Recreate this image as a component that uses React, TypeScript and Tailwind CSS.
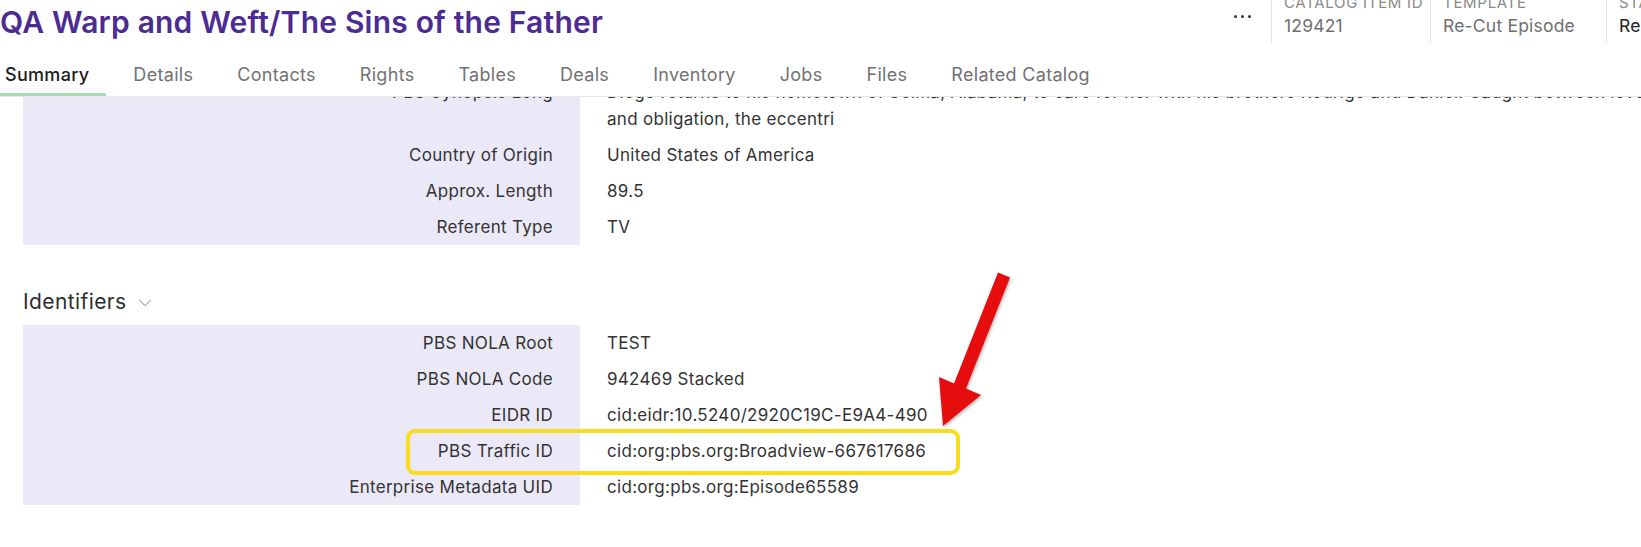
import * as React from "react";
import { ChevronDown } from "lucide-react";

type Row = {
  label: string;
  value: React.ReactNode;
};

const TABS = [
  "Summary",
  "Details",
  "Contacts",
  "Rights",
  "Tables",
  "Deals",
  "Inventory",
  "Jobs",
  "Files",
  "Related Catalog",
];

const generalRows: Row[] = [
  { label: "Country of Origin", value: "United States of America" },
  { label: "Approx. Length", value: "89.5" },
  { label: "Referent Type", value: "TV" },
];

const identifierRows: Row[] = [
  { label: "PBS NOLA Root", value: "TEST" },
  { label: "PBS NOLA Code", value: "942469 Stacked" },
  { label: "EIDR ID", value: "cid:eidr:10.5240/2920C19C-E9A4-490" },
  { label: "PBS Traffic ID", value: "cid:org:pbs.org:Broadview-667617686" },
  { label: "Enterprise Metadata UID", value: "cid:org:pbs.org:Episode65589" },
];

function FieldRow({ label, value }: Row) {
  return (
    <div className="flex">
      <div className="w-[557px] shrink-0 bg-[#ebe9f7] py-[4.5px] pr-[27px] text-right leading-[27px]">
        {label}
      </div>
      <div className="whitespace-nowrap py-[4.5px] pl-[27px] leading-[27px]">
        {value}
      </div>
    </div>
  );
}

function HeaderField({
  label,
  value,
  width,
  dark,
}: {
  label: string;
  value: string;
  width: string;
  dark?: boolean;
}) {
  return (
    <div className={`${width} shrink-0 overflow-hidden border-l border-[#e4e4e4] pb-[6px] pl-[12px]`}>
      <div className="-mt-[2px] whitespace-nowrap text-[15px] leading-[18px] tracking-[0.7px] text-[#8a8a8a]">
        {label}
      </div>
      <div
        className={`mt-[2px] whitespace-nowrap text-[17.5px] leading-[24px] tracking-[0.2px] ${
          dark ? "text-[#222]" : "text-[#6f6f6f]"
        }`}
      >
        {value}
      </div>
    </div>
  );
}

export default function App() {
  return (
    <div className="relative h-[547px] w-[1641px] overflow-hidden bg-white font-['Inter',sans-serif] text-[17px] tracking-[0.3px] text-[#333]">
      <header className="relative z-10 h-[97px] border-b border-[#e6e6e6] bg-white">
        <div className="flex h-[40px] items-start">
          <h1 className="min-w-0 flex-1 whitespace-nowrap pt-[2px] text-[30px] font-semibold leading-[40px] tracking-[0.2px] text-[#4c2c92]">
            QA Warp and Weft/The Sins of the Father
          </h1>
          <div className="-mt-[4px] flex shrink-0 items-start">
            <div className="mr-[20px] mt-[19px] flex gap-[4px]">
              <span className="h-[3px] w-[3px] rounded-full bg-[#333]" />
              <span className="h-[3px] w-[3px] rounded-full bg-[#333]" />
              <span className="h-[3px] w-[3px] rounded-full bg-[#333]" />
            </div>
            <HeaderField label="CATALOG ITEM ID" value="129421" width="w-[159px]" />
            <HeaderField label="TEMPLATE" value="Re-Cut Episode" width="w-[176px]" />
            <HeaderField label="STATUS" value="Ready" width="w-[35px]" dark />
          </div>
        </div>
        <nav className="mt-[23px] flex gap-[44px] pl-[5px]">
          {TABS.map((tab, i) => (
            <div
              key={tab}
              className={`relative whitespace-nowrap pb-[6px] text-[18px] leading-[24px] tracking-[0.3px] ${
                i === 0 ? "font-medium text-[#1c1c1c]" : "text-[#727272]"
              }`}
            >
              {tab}
              {i === 0 && (
                <span className="absolute -left-[5px] -right-[17px] -bottom-[3px] h-[3px] bg-[#a6dcb1]" />
              )}
            </div>
          ))}
        </nav>
      </header>

      <main className="-mt-[23px] pl-[23px]">
        <div className="flex">
          <div className="w-[557px] shrink-0 bg-[#ebe9f7] py-[4.5px] pr-[27px] text-right leading-[27px]">
            PBS Synopsis Long
          </div>
          <div className="whitespace-nowrap py-[4.5px] pl-[27px] leading-[27px]">
            Diego returns to his hometown of Selma, Alabama, to care for her with his brothers Rodrigo and Daniel. Caught between love
            <br />
            and obligation, the eccentri
          </div>
        </div>
        {generalRows.map((r) => (
          <FieldRow key={r.label} {...r} />
        ))}

        <div className="mb-[9px] mt-[43px] flex items-center text-[21px] leading-[28px] tracking-[0.4px] text-[#2e2e2e]">
          Identifiers
          <ChevronDown className="ml-[7px] mt-[2px] h-[22px] w-[22px] text-[#777]" strokeWidth={1} />
        </div>
        {identifierRows.map((r) => (
          <FieldRow key={r.label} {...r} />
        ))}
      </main>

      {/* annotation: highlight box */}
      <div className="absolute left-[406px] top-[429px] h-[46px] w-[554px] rounded-[9px] border-[4px] border-[#f9dd1d]" />

      {/* annotation: arrow */}
      <svg
        className="pointer-events-none absolute left-0 top-0"
        width="1641"
        height="547"
        viewBox="0 0 1641 547"
      >
        <defs>
          <filter id="shadow" x="-20%" y="-20%" width="140%" height="140%">
            <feDropShadow dx="1" dy="1.5" stdDeviation="1.5" floodColor="#000" floodOpacity="0.3" />
          </filter>
        </defs>
        <polygon
          points="998,272.5 954,383.6 939,377 943,426 981,395 966,388.4 1010,277.5"
          fill="#e50b0b"
          filter="url(#shadow)"
        />
      </svg>
    </div>
  );
}
